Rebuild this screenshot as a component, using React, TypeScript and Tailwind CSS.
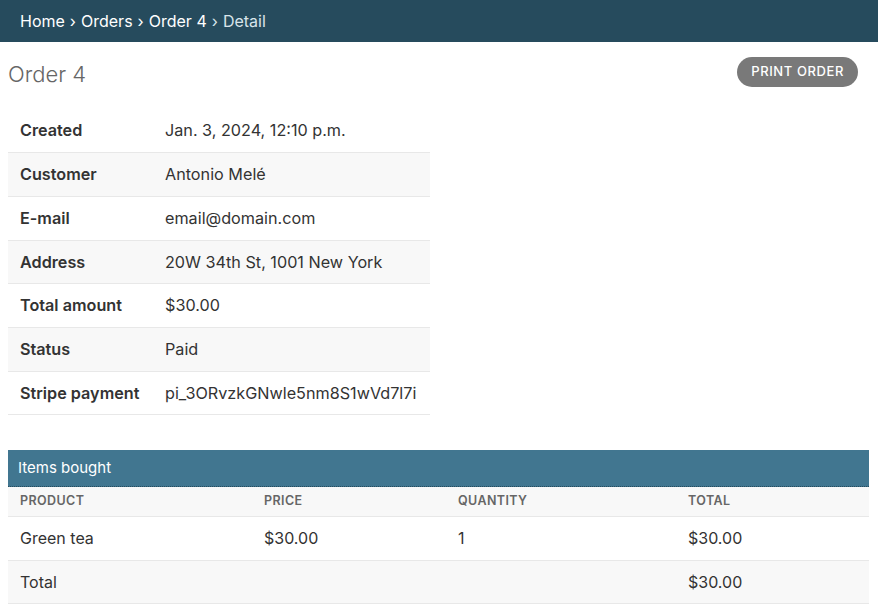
import React from "react";

const rows: [string, string][] = [
  ["Created", "Jan. 3, 2024, 12:10 p.m."],
  ["Customer", "Antonio Melé"],
  ["E-mail", "email@domain.com"],
  ["Address", "20W 34th St, 1001 New York"],
  ["Total amount", "$30.00"],
  ["Status", "Paid"],
  ["Stripe payment", "pi_3ORvzkGNwle5nm8S1wVd7l7i"],
];

export default function App() {
  return (
    <div
      className="min-h-[614px] bg-white text-[#333]"
      style={{ fontFamily: "Inter, 'Liberation Sans', sans-serif" }}
    >
      <div className="h-[42px] bg-[#264b5d] flex items-center px-5 text-white text-[16px]">
        <span>Home</span>
        <span className="mx-[5px]">›</span>
        <span>Orders</span>
        <span className="mx-[5px]">›</span>
        <span>Order 4</span>
        <span className="mx-[5px] text-[#d8e4ea]">›</span>
        <span className="text-[#d8e4ea]">Detail</span>
      </div>

      <div className="px-2">
        <div className="flex items-start justify-between pt-[15px]">
          <h1 className="mt-[2px] text-[22px] font-light text-[#666] leading-[30px]">Order 4</h1>
          <button className="mr-[12px] h-[30px] px-[14px] rounded-full bg-[#797979] text-white text-[13px] font-medium tracking-[0.6px] uppercase">
            Print order
          </button>
        </div>

        <table className="mt-[20px] w-[422px] border-collapse text-[16.2px]">
          <tbody>
            {rows.map(([k, v], i) => (
              <tr
                key={k}
                className={`h-[43.7px] border-b border-[#e8e8e8] ${i % 2 === 1 ? "bg-[#f8f8f8]" : "bg-white"}`}
              >
                <th className="text-left font-semibold pl-3 w-[157px] text-[#333]">{k}</th>
                <td className="pl-0 whitespace-nowrap">{v}</td>
              </tr>
            ))}
          </tbody>
        </table>

        <div className="mt-[35px] w-[861px]">
          <div className="h-[37px] bg-[#417690] text-white text-[15px] flex items-center pl-[10px] border-b border-dotted border-[#264b5d]">
            Items bought
          </div>
          <table className="w-full border-collapse">
            <thead>
              <tr className="h-[29px] bg-[#f8f8f8] border-b border-[#e8e8e8] text-[12.5px] uppercase text-[#666] font-semibold tracking-[0.4px]">
                <th className="text-left font-semibold pl-3 w-[244px]">Product</th>
                <th className="text-left font-semibold pl-3 w-[194px]">Price</th>
                <th className="text-left font-semibold pl-3 w-[230px]">Quantity</th>
                <th className="text-left font-semibold pl-3">Total</th>
              </tr>
            </thead>
            <tbody className="text-[16px]">
              <tr className="h-[44px] border-b border-[#e8e8e8] bg-white">
                <td className="pl-3">Green tea</td>
                <td className="pl-3">$30.00</td>
                <td className="pl-3">1</td>
                <td className="pl-3">$30.00</td>
              </tr>
              <tr className="h-[43px] border-b border-[#e8e8e8] bg-[#f8f8f8]">
                <td className="pl-3" colSpan={3}>Total</td>
                <td className="pl-3">$30.00</td>
              </tr>
            </tbody>
          </table>
        </div>
      </div>
    </div>
  );
}
